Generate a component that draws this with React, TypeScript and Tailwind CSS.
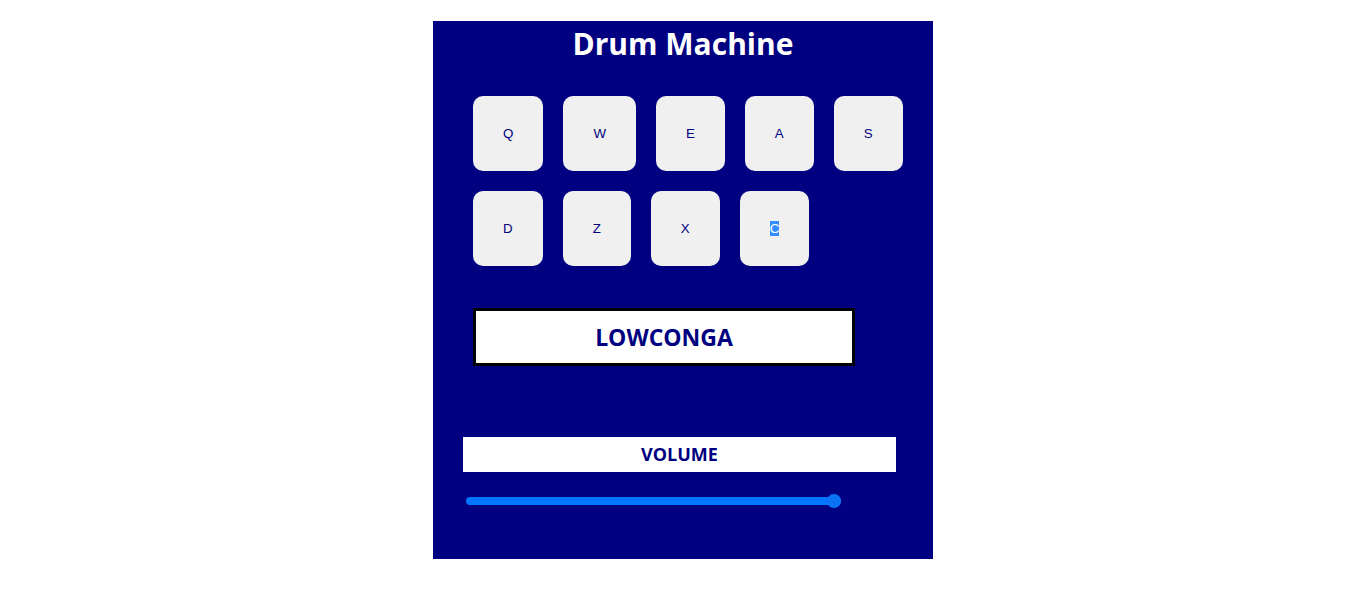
import React, { useState } from 'react';

const PADS = [
  { key: 'Q', id: 'Heater-1' },
  { key: 'W', id: 'Heater-2' },
  { key: 'E', id: 'Heater-3' },
  { key: 'A', id: 'Heater-4' },
  { key: 'S', id: 'Clap' },
  { key: 'D', id: 'Open-HH' },
  { key: 'Z', id: 'Kick-n-Hat' },
  { key: 'X', id: 'Kick' },
  { key: 'C', id: 'LowConga' },
];

const DrumPad: React.FC<{ padKey: string; selected?: boolean; onPress: () => void }> = ({ padKey, selected, onPress }) => (
  <button
    onClick={onPress}
    className="px-[30px] py-[30px] rounded-[10px] bg-[#f0f0f0] text-[#000080] text-[13.333px] leading-[15px] font-['Liberation_Sans',Arial,sans-serif]"
  >
    {selected ? <span className="bg-[#338fff] text-white">{padKey}</span> : padKey}
  </button>
);

export default function App() {
  const [display, setDisplay] = useState('LOWCONGA');
  const [volume, setVolume] = useState(100);

  return (
    <div className="min-h-[606px] bg-white font-['Open_Sans','Noto_Sans',sans-serif]">
      <div className="mx-auto mt-[21px] w-[500px] h-[538px] bg-[#000080] pt-[2px]">
        <h1 className="text-center text-white font-bold text-[30px] leading-[41px]">Drum Machine</h1>

        <div className="mt-[32px] ml-[40px] w-[440px] flex flex-wrap gap-[20px]">
          {PADS.map((p) => (
            <DrumPad
              key={p.key}
              padKey={p.key}
              selected={p.key === 'C'}
              onPress={() => setDisplay(p.id.toUpperCase())}
            />
          ))}
        </div>

        <div className="mt-[42px] ml-[40px] w-[382px] h-[58px] border-[3px] border-black bg-white flex items-center justify-center">
          <h2 className="text-[#000080] font-bold text-[23px] leading-[32px]">{display}</h2>
        </div>

        <div className="mt-[71px] ml-[30px] w-[433px] h-[35px] bg-white flex items-center justify-center">
          <h3 className="text-[#000080] font-bold text-[18px] leading-[25px]">VOLUME</h3>
        </div>

        <div className="mt-[22px] ml-[33px] w-[375px] h-[14px] flex items-center">
          <input
            type="range"
            min={0}
            max={100}
            value={volume}
            onChange={(e) => setVolume(Number(e.target.value))}
            className="w-full h-[14px] appearance-none bg-transparent cursor-pointer [&::-webkit-slider-runnable-track]:h-[8px] [&::-webkit-slider-runnable-track]:rounded-full [&::-webkit-slider-runnable-track]:bg-[#0075ff] [&::-webkit-slider-thumb]:appearance-none [&::-webkit-slider-thumb]:w-[14px] [&::-webkit-slider-thumb]:h-[14px] [&::-webkit-slider-thumb]:rounded-full [&::-webkit-slider-thumb]:bg-[#0a74f5] [&::-webkit-slider-thumb]:mt-[-3px]"
          />
        </div>
      </div>
    </div>
  );
}
